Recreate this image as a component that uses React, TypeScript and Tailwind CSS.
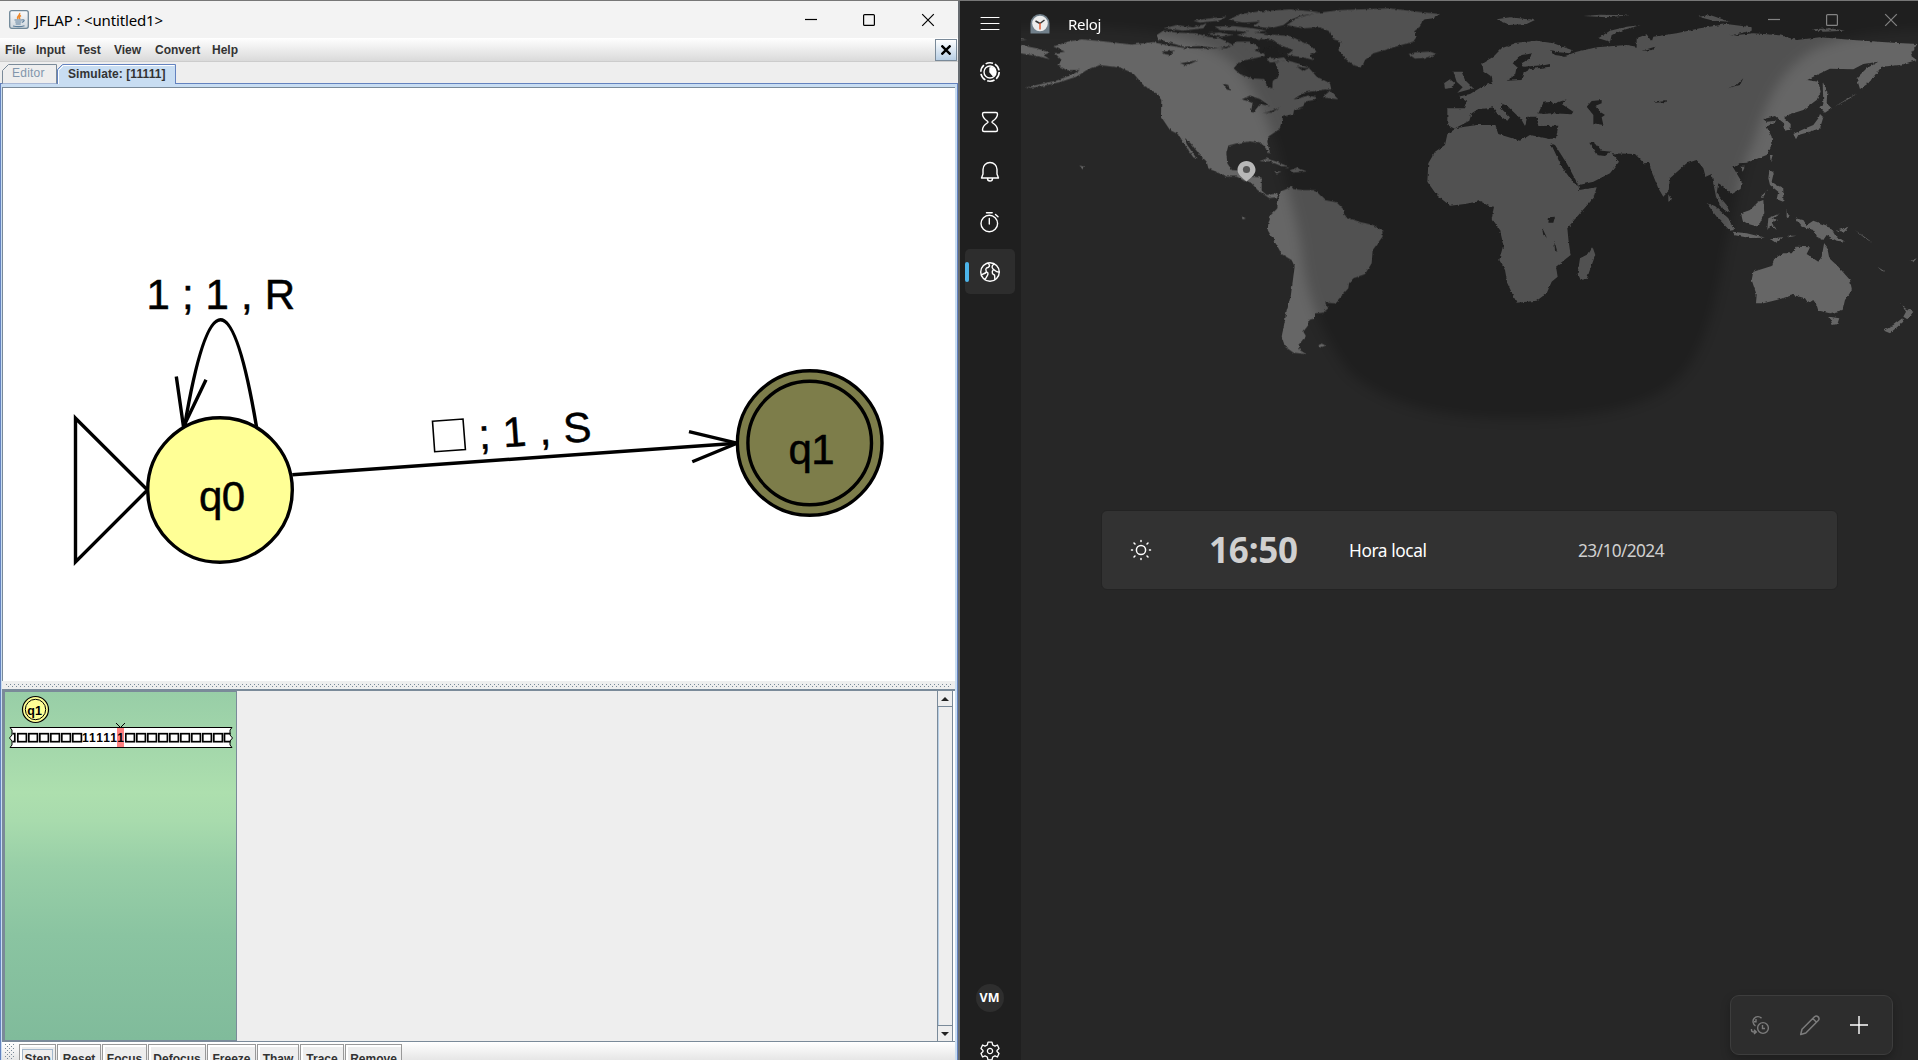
import React from "react";

const MENUS = [
  { label: "File", w: "w-[31px]" },
  { label: "Input", w: "w-[41px]" },
  { label: "Test", w: "w-[37px]" },
  { label: "View", w: "w-[41px]" },
  { label: "Convert", w: "w-[57px]" },
  { label: "Help", w: "w-[40px]" },
];

const STEPS = [
  { label: "Step", w: "w-[37px]" },
  { label: "Reset", w: "w-[44px]" },
  { label: "Focus", w: "w-[45px]" },
  { label: "Defocus", w: "w-[58px]" },
  { label: "Freeze", w: "w-[49px]" },
  { label: "Thaw", w: "w-[42px]" },
  { label: "Trace", w: "w-[44px]" },
  { label: "Remove", w: "w-[57px]" },
];

const ARIAL = "font-['Liberation_Sans',Arial,sans-serif]";
const SEGOE = "font-['Noto_Sans','Open_Sans',sans-serif]";
const DOTS =
  "bg-[image:radial-gradient(circle_at_0.5px_0.5px,#7a8a99_0.7px,transparent_0.7px),radial-gradient(circle_at_2.5px_2.5px,#7a8a99_0.7px,transparent_0.7px)] bg-[length:4px_4px]";

function JavaIcon() {
  return (
    <svg width="20" height="19" viewBox="0 0 20 19" className="shrink-0">
      <defs>
        <linearGradient id="jv" x1="0" y1="0" x2="0" y2="1">
          <stop offset="0" stopColor="#fbfcfd" />
          <stop offset="1" stopColor="#cfd6dc" />
        </linearGradient>
      </defs>
      <rect x=".7" y=".7" width="18.6" height="17.6" rx="2" fill="url(#jv)" stroke="#6f8798" strokeWidth="1.3" />
      <path d="M10.5 3c1.5 2-3.5 3-1.5 6M12 5.5c-2 1-2 2-1 3.5" stroke="#ee8a2e" strokeWidth="1.5" fill="none" />
      <path d="M5.5 10h8M6.3 12h6M6.700 14h5M4 16c4 .8 8 .8 11.500-.3M13.500 9.800c2.500-.5 2 2-.6 2.600" stroke="#5d7f9c" strokeWidth="1.2" fill="none" />
    </svg>
  );
}

function WindowButtons({ color }: { color: string }) {
  return (
    <svg width="130" height="14" viewBox="0 0 130 14" fill="none" stroke={color} strokeWidth="1.2">
      <path d="M0 6.5h12" />
      <rect x="58.6" y="1.6" width="10.8" height="10.8" rx="1" />
      <path d="M117.2 1.2l11.6 11.6M128.8 1.2l-11.6 11.6" />
    </svg>
  );
}

function Diagram() {
  return (
    <svg width="951" height="593" viewBox="3 88 951 593" className={`block ${ARIAL}`} fontSize="42" fill="#000">
      <g fill="none" stroke="#000" strokeWidth="3.4" transform="translate(0 .7)">
        <path d="M75.5 417.5L147.5 489.3L75.5 561.2Z" />
        <path d="M184.5 426Q220.5 212 256.5 426" />
        <path d="M176.3 375.7L183.5 426L206 379" />
        <path d="M292.3 474L737 442.5" />
        <path d="M689 430.9L737 442.5L692.3 461" />
        <circle cx="220" cy="489.3" r="72.3" fill="#ffff96" />
        <circle cx="809.7" cy="442.3" r="72.3" fill="#7d7d4a" />
        <circle cx="809.7" cy="442.3" r="61.8" />
        <path d="M432.5 420.5L463 418.3L465.4 448.8L434.7 451Z" strokeWidth="1.6" />
      </g>
      <g stroke="#000" strokeWidth=".5">
        <text x="146.5" y="309.3" textLength="148.5">1 ; 1 , R</text>
        <text x="199" y="511" textLength="46">q0</text>
        <text x="788.5" y="464" textLength="46">q1</text>
        <text x="0" y="0" transform="translate(479.500 449) rotate(-4.050)" textLength="113">; 1 , S</text>
      </g>
    </svg>
  );
}

function Tape() {
  const left = [0, 1, 2, 3, 4, 5];
  const right = [0, 1, 2, 3, 4, 5, 6, 7, 8];
  return (
    <svg width="231" height="66" viewBox="5 692 231 66" className={`block ${ARIAL}`}>
      <g stroke="#000" fill="#ffff96">
        <circle cx="35.5" cy="709.5" r="13" strokeWidth="1.2" />
        <circle cx="35.5" cy="709.5" r="10.2" strokeWidth="1" />
      </g>
      <text x="27.3" y="715" fontSize="12.5" fontWeight="bold">q1</text>
      <path d="M10 727.5H232L230 730V735L232.5 738L230 741V745L232 747.5H10L12 745V741L9.5 738L12 735V730Z" fill="#fff" stroke="#000" />
      <rect x="117" y="728" width="7" height="19" fill="#ff8080" />
      <path d="M116 723L120.5 727.5L125 723" fill="none" stroke="#000" />
      <g fill="none" stroke="#000" strokeWidth="1.700">
        <path d="M12.5 733.7h2.3v8h-2.3M230.5 733.7h-6v8h6" />
        {left.map((i) => (
          <rect key={i} x={17.8 + i * 11} y="733.7" width="8.6" height="8" />
        ))}
        {right.map((i) => (
          <rect key={i} x={125.8 + i * 11} y="733.7" width="8.6" height="8" />
        ))}
      </g>
      <text x="82" y="742" fontSize="12" fontWeight="bold" textLength="42">111111</text>
    </svg>
  );
}

function Arrow({ down = false }: { down?: boolean }) {
  return (
    <svg width="8" height="4" viewBox="0 0 8 4" fill="#222">
      <path d={down ? "M0 0h8L4 4z" : "M0 4h8L4 0z"} />
    </svg>
  );
}

function Jflap() {
  return (
    <div className={`flex h-full w-[958px] shrink-0 flex-col bg-[#eee] ${ARIAL}`}>
      <div className="flex h-[37px] shrink-0 items-center bg-[#f3f3f3] pl-[9px] pr-[23px]">
        <JavaIcon />
        <span className={`ml-1.5 flex-1 whitespace-pre text-[15px] leading-5 tracking-[-0.15px] text-black ${SEGOE}`}>JFLAP : &lt;untitled1&gt;</span>
        <WindowButtons color="#000" />
      </div>
      <div className="flex h-[24px] shrink-0 items-center border-b border-[#ccc] bg-linear-to-b from-white to-[#dadada] pl-[5px]">
        {MENUS.map((m) => (
          <span key={m.label} className={`${m.w} text-[12px] font-bold leading-4 text-[#333]`}>{m.label}</span>
        ))}
        <span className="ml-auto mr-px flex h-[22px] w-[22px] items-center justify-center border border-[#7a8a99] bg-linear-to-b from-white to-[#b8cfe5]">
          <svg width="10" height="10" viewBox="0 0 10 10" stroke="#000" strokeWidth="2.4"><path d="M.5 .5l9 9M9.5 .5l-9 9" /></svg>
        </span>
      </div>
      <div className="flex h-[22px] shrink-0 items-end border-b border-[#6382bf] pl-0.5">
        <svg width="174" height="20" viewBox="2 64 174 20" className="-mb-px block">
          <path d="M2.5 83.5V70.5L8.5 64.5H56.5V83.5" fill="#eee" stroke="#7a8a99" />
          <path d="M57.5 84V69.5L62.5 64.5H175.5V84Z" fill="#c8ddf2" />
          <path d="M57.5 84V69.5L62.5 64.5H175.5V84" fill="none" stroke="#6382bf" />
          <path d="M58.5 84V70.5L63.5 65.5H174.5" fill="none" stroke="#fff" />
          <text x="12" y="77" fontSize="12" fill="#8296ac" textLength="32.5">Editor</text>
          <text x="68" y="77.5" fontSize="12" fontWeight="bold" fill="#333" textLength="97.5">Simulate: [11111]</text>
        </svg>
      </div>
      <div className="flex min-h-0 flex-1 flex-col border-l border-r border-l-[#6382bf] border-r-[#6382bf] bg-[#c8ddf2] pl-px pr-0.5 pt-[3px]">
        <div className="h-[594px] shrink-0 overflow-hidden border-l border-t border-[#7a8a99] bg-white">
          <Diagram />
        </div>
        <div className="flex h-[8px] shrink-0 items-start bg-[#eee] px-1 pt-[3px]">
          <div className={`h-[3px] flex-1 ${DOTS}`} />
        </div>
        <div className="flex h-[353px] shrink-0 border-b border-l-[3px] border-t-[2px] border-[#7a8a99] bg-[#eee]">
          <div className="w-[232px] shrink-0 border-y border-r border-[#7a8a99] bg-[linear-gradient(#98cea7,#addfae_29%,#a8dbad_37%,#98cfa7_50%,#8ac4a1_70%,#80bb9b)]">
            <Tape />
          </div>
          <div className="flex-1" />
          <div className="flex w-[16px] flex-col border-x border-[#7a8a99] bg-[#eee]">
            <div className="flex h-[16px] items-center justify-center border-b border-[#7a8a99]"><Arrow /></div>
            <div className="flex-1 border-l border-[#b8cfe5]" />
            <div className="flex h-[16px] items-center justify-center border-t border-[#7a8a99]"><Arrow down /></div>
          </div>
          <div className="w-0.5 bg-white" />
        </div>
        <div className="flex min-h-0 flex-1 overflow-hidden bg-linear-to-b from-white to-[#e6e6e6] pl-[3px]">
          <div className={`mt-0.5 w-[10px] ${DOTS}`} />
          <div className="ml-1 mt-0.5 flex gap-px">
            {STEPS.map((s, i) => (
              <div key={s.label} className={`${s.w} flex h-[30px] justify-center border border-[#999] bg-[#eee] pt-1 shadow-[inset_2px_2px_0_#fff]`}>
                <span className={i === 0 ? "h-6 whitespace-nowrap border border-[#a3b8cc] px-px pt-[2px] text-[12px] font-bold leading-[15px] text-[#333]" : "pt-[3px] text-[12px] font-bold leading-[15px] text-[#333]"}>{s.label}</span>
              </div>
            ))}
          </div>
        </div>
      </div>
    </div>
  );
}

function WorldMap() {
  return (
    <svg width="897" height="430" viewBox="0 0 897 430" className="block">
      <defs>
        <filter id="soft" x="-10%" y="-10%" width="120%" height="120%"><feGaussianBlur stdDeviation="18" /></filter>
        <filter id="coast" x="-2%" y="-2%" width="104%" height="104%">
          <feTurbulence type="fractalNoise" baseFrequency="0.09" numOctaves="2" seed="4" />
          <feDisplacementMap in="SourceGraphic" scale="9" xChannelSelector="R" yChannelSelector="G" />
        </filter>
      </defs>
      <g transform="translate(-1 0) scale(.33333)">
        <g filter="url(#coast)">
          <g fill="#666">
            <path d="M105 160L135 155L100 140L145 125L185 118L250 124L335 134L400 126L440 135L500 145L560 146L620 145L650 125L690 125L700 150L745 165L700 176L660 183L641 205L660 222L695 235L733 237L740 258L757 265L758 243L776 228L775 210L765 187L800 180L840 192L868 205L890 230L930 250L934 268L895 272L850 278L822 299L870 285L905 283L880 300L855 305L850 318L822 330L820 342L790 350L782 375L778 388L745 410L742 425L750 460L742 455L730 432L690 424L650 430L625 437L619 460L622 490L636 510L662 512L676 496L695 495L696 530L725 533L725 572L740 585L773 580L772 592L748 594L713 570L693 548L670 541L650 530L620 530L565 505L560 485L540 465L512 430L495 414L500 432L530 476L520 472L493 432L475 403L450 390L423 350L424 300L410 280L370 255L340 220L300 203L240 195L200 210L170 230L120 246L60 260L20 264L20 262L110 242L160 222L180 210L140 210L112 195L125 180Z" />
            <path d="M3 135L50 145L90 158L70 165L90 178L60 170L3 160ZM3 117L22 118L3 121Z" />
            <path d="M410 105L430 92L470 98L530 100L560 110L600 115L640 135L600 145L540 138L490 140L450 128L415 118Z" />
            <path d="M430 85L470 75L520 82L560 70L550 85L490 92ZM520 62L570 55L620 50L600 62L540 68ZM625 60L660 42L720 34L810 28L900 36L840 48L810 60L790 75L750 85L700 78L720 65L670 68ZM580 80L640 78L700 85L740 92L700 98L640 92L600 90ZM560 100L600 98L640 105L600 110ZM650 105L690 95L740 102L810 108L870 135L890 155L870 165L880 180L850 172L800 165L820 150L780 135L760 120L700 115ZM660 135L700 130L720 145L690 155ZM740 176L790 170L800 182L750 188Z" />
            <path d="M800 75L830 55L880 40L960 30L1110 25L1190 35L1260 42L1210 55L1200 80L1182 95L1190 110L1180 125L1110 145L1060 160L1035 180L1025 203L1000 195L975 175L955 150L965 125L940 118L930 95L900 82L850 85Z" />
            <path d="M1165 162L1190 157L1230 155L1250 162L1220 173L1185 176ZM908 292L930 272L955 298ZM718 484L740 476L775 487L810 502L785 498L750 484ZM808 512L830 503L860 514L820 518ZM762 514L785 515L770 520ZM665 650L678 655L668 658ZM895 1036L905 1031L917 1037L900 1043ZM1065 1054L1080 1056ZM178 497L192 500L188 508ZM155 485L175 490Z" />
            <path d="M775 595L782 575L815 560L820 567L850 570L885 570L915 600L950 607L968 625L975 650L1020 666L1060 675L1087 692L1088 710L1058 750L1055 790L1035 822L1000 835L987 850L985 865L945 910L915 908L925 925L910 938L885 940L885 955L865 960L865 975L850 995L858 1008L835 1035L840 1050L858 1062L820 1058L795 1040L785 1010L795 960L800 930L812 890L824 800L815 780L785 762L770 735L743 690L745 670L752 645L772 625Z" />
            <g transform="translate(1200 0)">
              <path d="M82 325L135 325L142 305L115 290L150 282L190 258L215 249L212 228L190 212L187 190L220 170L245 145L290 128L350 122L400 130L455 150L450 160L400 155L430 170L470 155L530 142L620 135L650 140L650 115L680 103L695 125L700 110L770 100L840 85L920 72L995 82L995 92L930 107L1000 100L1080 106L1130 120L1200 112L1300 120L1420 128L1492 132L1470 165L1490 180L1440 195L1385 200L1365 225L1345 250L1320 267L1310 235L1340 205L1375 185L1330 192L1300 208L1230 206L1190 225L1162 240L1195 245L1202 275L1190 300L1150 330L1110 343L1090 352L1112 372L1112 388L1095 392L1092 370L1065 348L1030 358L1040 365L1070 362L1040 380L1055 410L1057 430L1040 465L980 488L958 490L940 503L965 545L962 567L935 583L912 560L895 550L890 580L920 615L930 640L905 625L888 590L880 550L875 522L857 530L850 505L830 480L800 490L750 535L746 572L730 590L715 565L695 515L688 488L672 490L645 462L575 460L597 485L570 520L520 545L475 556L478 570L530 562L520 595L480 640L442 685L446 725L452 765L408 800L413 830L395 845L380 880L350 902L290 908L262 850L255 810L238 780L250 735L240 690L215 655L222 620L205 617L180 603L135 612L90 617L50 585L22 545L25 490L45 455L75 435L82 403L105 387L82 375Z" />
              <path d="M100 215L125 215L135 240L160 265L112 278L128 262L110 245ZM72 250L90 238L103 248L98 263L75 266Z" />
              <path d="M535 115L570 92L620 80L662 75L610 90L575 105L570 125ZM230 58L270 52L345 60L320 72L270 75ZM0 48L60 42L40 55L0 60ZM490 48L540 44L630 46L560 52ZM835 50L870 45L930 65L880 62ZM1175 88L1230 85L1275 92L1210 95Z" />
              <path d="M518 742L526 765L500 837L482 840L473 820L480 775L505 762ZM745 583L755 600L745 605ZM860 610L885 618L925 655L942 690L930 692L890 650ZM938 695L980 700L1035 713L990 714L945 706ZM1050 715L1090 712L1070 728ZM1100 707L1130 707L1105 712ZM963 640L990 630L1015 605L1030 600L1033 640L1015 680L985 672L968 662ZM1045 655L1080 640L1055 657L1072 660L1058 667L1070 690L1052 675L1042 690ZM1048 512L1062 515L1055 545L1070 555L1090 565L1090 605L1070 598L1075 575L1050 555L1045 535ZM1050 465L1058 465L1052 487ZM960 500L975 500L968 515ZM1022 590L1045 568L1030 590ZM1100 630L1110 650L1100 655Z" />
              <path d="M1125 655L1150 660L1160 675L1180 662L1230 680L1245 705L1275 725L1250 722L1220 705L1210 720L1190 710L1180 690L1145 680ZM1250 692L1285 680L1275 695ZM1305 690L1360 730L1335 715ZM1372 800L1397 816L1385 812ZM1472 782L1490 775L1480 787Z" />
              <path d="M1212 732L1222 745L1228 775L1255 800L1290 840L1296 870L1275 900L1268 930L1230 940L1195 932L1190 915L1180 900L1165 910L1155 895L1120 885L1070 900L1030 910L1008 910L1010 885L995 840L1000 815L1055 798L1065 775L1090 760L1115 760L1130 740L1170 742L1160 762L1195 785L1205 770ZM1228 950L1258 955L1252 972L1238 975Z" />
              <path d="M1440 908L1455 925L1480 935L1462 958L1450 950L1458 935ZM1447 955L1450 965L1410 1000L1392 992L1420 975ZM1208 245L1222 275L1220 310L1235 325L1215 338L1198 322L1210 312ZM1200 342L1210 352L1200 385L1165 397L1135 405L1128 418L1120 402L1150 388L1180 375L1195 355ZM1240 322L1310 280L1290 295ZM660 1017L675 1018ZM1380 230L1400 240Z" />
            </g>
          </g>
          <g fill="#272727">
            <path d="M425 155L465 152L450 165L435 162ZM480 190L535 180L500 197ZM608 250L625 255L630 272L620 268ZM665 298L690 287L720 297L750 318L720 312L700 338L693 335L698 308ZM728 338L750 335L780 322L755 338ZM730 145L770 140L780 160L810 170L770 175L735 170ZM830 200L865 205L850 213ZM820 298L850 280L920 268L910 290L880 303L890 292L860 285Z" />
            <g transform="translate(1200 0)">
              <path d="M105 385L148 362L155 340L175 327L205 325L218 322L235 345L262 362L270 352L243 325L243 310L262 318L290 345L305 360L315 378L322 350L350 350L355 378L415 377L408 415L390 417L330 405L300 422L235 402L225 375L170 375Z" />
              <path d="M355 340L370 308L395 305L400 312L440 298L425 312L460 335L455 343L400 340L370 342ZM500 320L515 303L545 300L545 310L525 318L540 335L555 345L545 352L550 375L520 370L520 345ZM392 430L405 435L440 490L475 555L460 548L425 500ZM508 428L525 428L545 452L575 455L555 468L530 465ZM278 190L305 165L335 160L330 175L305 190L310 200L375 195L390 192L390 200L330 208L310 220L305 240L260 242L285 225L290 200ZM390 150L410 155L440 170L405 165ZM387 652L405 650L400 668L385 668ZM365 680L380 712L370 705ZM403 722L412 755L405 752ZM925 265L950 255L970 235L960 255ZM698 305L740 300L740 306L705 308ZM665 152L705 140L700 150Z" />
            </g>
          </g>
        </g>
        <path filter="url(#soft)" opacity=".2" fill="#000" d="M-100 -100V82L150 82C400 85 560 110 650 200C720 290 745 370 775 450C790 540 830 640 845 750C860 900 910 1010 990 1120C1120 1230 1300 1256 1500 1256C1720 1256 1880 1220 1960 1150C2050 1080 2090 900 2115 750C2150 620 2160 500 2200 430C2240 300 2280 210 2380 150C2500 95 2620 92 2800 85V-100Z" />
      </g>
      <path d="M225.500 161c-5 0-9 4-9 8.800 0 4.500 4.500 8 9 11.700 4.500-3.700 9-7.200 9-11.700 0-4.800-4-8.800-9-8.800z" fill="#b8b8b8" />
      <circle cx="225.500" cy="169.500" r="3.600" fill="#555" />
    </svg>
  );
}

function NavIcon({ name }: { name: string }) {
  const p = { fill: "none", stroke: "#fff", strokeWidth: 1.4, strokeLinecap: "round" as const, strokeLinejoin: "round" as const };
  return (
    <svg width="22" height="22" viewBox="-11 -11 22 22" {...p}>
      {name === "menu" && <path d="M-9-6.500H9M-9-.5H9M-9 5.500H9" strokeWidth="1.1" />}
      {name === "focus" && (
        <>
          <circle r="9.200" strokeDasharray="7.600 2.035" strokeWidth="1.600" strokeLinecap="butt" />
          <circle r="6" />
          <path d="M0-4A4 4 0 0 1 3 3.500L0 0Z" fill="#fff" stroke="#fff" />
        </>
      )}
      {name === "timer" && <path d="M-6-9.500H6A1.500 1.500 0 0 1 7.500-8C7.500-4 5-2.500 2.500-.8Q1.500 0 2.500.8C5 2.500 7.500 4 7.500 8A1.500 1.500 0 0 1 6 9.500H-6A1.500 1.500 0 0 1-7.500 8C-7.500 4-5 2.500-2.500.8Q-1.500 0-2.500-.8C-5-2.500-7.500-4-7.500-8A1.500 1.500 0 0 1-6-9.500Z" />}
      {name === "alarm" && <path d="M-7-2.500A7 7 0 0 1 7-2.500V2L8.500 6H-8.500L-7 2ZM-2.500 6.500A2.500 2.500 0 0 0 2.500 6.500" />}
      {name === "stopwatch" && <path d="M-9 1.500A8.300 8.300 0 1 0 7.600 1.500A8.300 8.300 0 1 0-9 1.500M-.7-3.500V2M-3.500-9.300H2.200M5.500-7.500L8-5.200" />}
      {name === "world" && (
        <>
          <circle r="9.300" />
          <path d="M-2-9C1-6-1-4.500-3.500-4C-5-3-4-1.500-3.500 0C-5 2-7 1.500-8.500 3M-3.500 0C-1 .5-2 3-3.500 5C-4 6.500-5 7-5.500 7.500M4-8C1-6 2-4 3.500-2.500C1 0 2.500 2.500 4.500 3C5 5 4.500 6 5 7.500M3.500-2.500C5-2 6 .5 9 0" />
        </>
      )}
      {name === "gear" && (
        <>
          <path d="M-2-8.800H2L2.700-6L5-4.800L7.400-6L9-2.500L7-.5V.5L9 2.500L7.400 6L5 4.800L2.700 6L2 8.800H-2L-2.700 6L-5 4.800L-7.400 6L-9 2.500L-7 .5V-.5L-9-2.500L-7.400-6L-5-4.800L-2.700-6Z" strokeWidth="1.300" />
          <circle r="2.600" strokeWidth="1.300" />
        </>
      )}
    </svg>
  );
}

function Sidebar() {
  return (
    <div className="flex h-full w-[61px] shrink-0 flex-col items-center bg-[#1f1f1f] pr-0.5">
      <div className="mt-3"><NavIcon name="menu" /></div>
      <div className="mt-[14px] flex flex-col gap-[5px]">
        {["focus", "timer", "alarm", "stopwatch", "world"].map((n) => (
          <div key={n} className={n === "world" ? "flex h-[45px] w-[50px] items-center rounded-[5px] bg-[#2d2d2d]" : "flex h-[45px] w-[50px] items-center pl-1"}>
            {n === "world" && <span className="h-5 w-1 rounded-full bg-[#4cb4ea]" />}
            <span className="ml-2.5"><NavIcon name={n} /></span>
          </div>
        ))}
      </div>
      <div className={`mt-auto flex h-7 w-7 items-center justify-center rounded-full bg-[#2e2e2e] text-[12.5px] font-bold text-white ${SEGOE}`}>VM</div>
      <div className="mb-[-2px] mt-[28px]"><NavIcon name="gear" /></div>
    </div>
  );
}

function ClockApp() {
  return (
    <div className={`flex h-full flex-1 bg-[#272727] ${SEGOE}`}>
      <Sidebar />
      <div className="relative flex h-full w-[897px] flex-col">
        <div className="-mt-px h-[430px]"><WorldMap /></div>
        <div className="absolute inset-x-0 top-0 flex h-[38px] items-center pl-[9px] pr-[20px]">
          <svg width="20" height="20" viewBox="0 0 20 20" className="mt-2">
            <path d="M.5 19.500V9.500a9.500 9.500 0 0 1 19 0v10z" fill="#71808b" />
            <circle cx="10" cy="9.500" r="7.800" fill="#ececec" />
            <path d="M10 9.500L5.500 7M10 9.500L14.500 6" stroke="#333" strokeWidth="1.500" />
            <path d="M10 9v6.500" stroke="#e2572b" strokeWidth="1.400" />
          </svg>
          <span className="ml-[18px] mt-2 flex-1 text-[15px] leading-5 tracking-[-0.3px] text-white">Reloj</span>
          <WindowButtons color="#838383" />
        </div>
        <div className="ml-[80px] mt-20 flex h-[80px] w-[737px] items-center rounded-[6px] border border-[#232323] bg-[#323232]">
          <svg width="22" height="22" viewBox="-11 -11 22 22" className="ml-[28px]" fill="none" stroke="#fff" strokeWidth="1.500" strokeLinecap="round">
            <circle r="4.600" />
            <path d="M0-9.500V-8.500M0 9.500V8.500M-9.500 0H-8.500M9.500 0H8.500M-7-7L-6-6M7-7L6-6M-7 7L-6 6M7 7L6 6" />
          </svg>
          <span className="ml-[57px] w-[140px] text-[35px] font-bold leading-10 tracking-[-0.2px] text-[#d0d0d0]">16:50</span>
          <span className="w-[229px] pt-0.5 text-[17.300px] tracking-[-0.4px] text-white">Hora local</span>
          <span className="pt-0.5 text-[17.300px] tracking-[-0.6px] text-[#cfcfcf]">23/10/2024</span>
        </div>
        <div className="mb-[5px] ml-auto mr-[25px] mt-auto flex h-[60px] w-[163px] items-center rounded-[9px] border border-[#3d3d3d] bg-[#2d2d2d] pl-[18px] shadow-[0_4px_10px_rgba(0,0,0,0.25)]">
          <svg width="22" height="22" viewBox="-11 -11 22 22" fill="none" stroke="#7c7c7c" strokeWidth="1.400">
            <path d="M1.500-6.800A4.900 4.900 0 1 0-4.500 .8M-4-6V-3.300H-6" />
            <circle cx="3" cy="3" r="5.400" />
            <path d="M2.500 0V3.500H5M-8.500 4V5Q-8.500 7-6 7H-4M-6 4.700L-3.700 7L-6 9" />
          </svg>
          <svg width="22" height="22" viewBox="-11 -11 22 22" fill="none" stroke="#7c7c7c" strokeWidth="1.500" strokeLinejoin="round" className="ml-[28px]">
            <path d="M-9.300 9.500L-8 4.200L4.500-8.200C7-10.500 10.500-7 8.200-4.500L-4.200 8ZM2.800-6.500L6.500-2.800" />
          </svg>
          <svg width="18" height="18" viewBox="0 0 18 18" stroke="#fff" strokeWidth="1.400" className="ml-[29px]"><path d="M9 0V18M0 9H18" /></svg>
        </div>
      </div>
    </div>
  );
}

export default function App() {
  return (
    <div className="flex h-[1060px] w-[1918px] overflow-hidden border-t border-[#777]">
      <Jflap />
      <div className="h-full w-0.5 shrink-0 bg-[#666b70]" />
      <ClockApp />
    </div>
  );
}
